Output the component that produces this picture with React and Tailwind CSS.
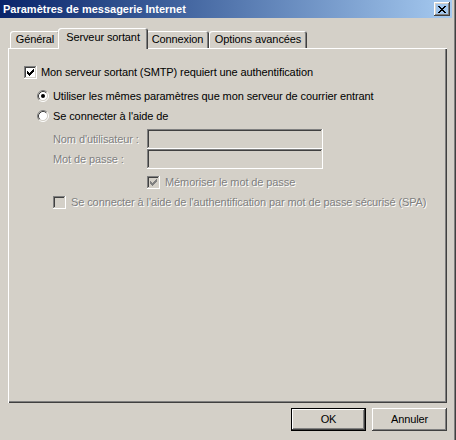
import React from "react";

// classic 3D bevels
const raised =
  "shadow-[inset_-1px_-1px_#404040,inset_1px_1px_#ffffff,inset_-2px_-2px_#808080,inset_2px_2px_#d4d0c8]";
const sunken =
  "shadow-[inset_-1px_-1px_#ffffff,inset_1px_1px_#808080,inset_-2px_-2px_#d4d0c8,inset_2px_2px_#404040]";
const disabledText = "text-[#808080] [text-shadow:1px_1px_0_#ffffff]";

const CheckBox = ({ checked, disabled }) => (
  <span
    className={`relative block w-[13px] h-[13px] shrink-0 ${sunken} ${
      disabled ? "bg-[#d4d0c8]" : "bg-white"
    }`}
  >
    {checked && (
      <svg className="absolute left-[3px] top-[3px]" width="7" height="7" viewBox="0 0 7 7">
        <path
          d="M0 2h1v1h1v1h1v-1h1v-1h1v-1h1v-1h1v3h-1v1h-1v1h-1v1h-1v1h-1v-1h-1v-1h-1v-1h-1z"
          fill={disabled ? "#808080" : "#000"}
        />
      </svg>
    )}
  </span>
);

const Radio = ({ checked }) => (
  <svg width="12" height="12" viewBox="0 0 12 12" className="block shrink-0">
    <circle cx="6" cy="6" r="4.5" fill="#fff" />
    <path d="M2.11 9.89A5.5 5.5 0 0 1 9.89 2.11" stroke="#808080" fill="none" />
    <path d="M9.89 2.11A5.5 5.5 0 0 1 2.11 9.89" stroke="#ffffff" fill="none" />
    <path d="M2.82 9.18A4.5 4.5 0 0 1 9.18 2.82" stroke="#404040" fill="none" />
    <path d="M9.18 2.82A4.5 4.5 0 0 1 2.82 9.18" stroke="#d4d0c8" fill="none" />
    {checked && <circle cx="6" cy="6" r="2" fill="#000" />}
  </svg>
);

const Tab = ({ label, width, active }) => (
  <div
    className={`flex justify-center rounded-t-[3px] shadow-[inset_1px_1px_#ffffff,inset_-1px_0_#404040,inset_-2px_0_#808080] bg-[#d4d0c8] ${
      active ? "relative z-10 h-[21px] -mb-[1px] -mx-[2px] pt-[3px]" : "h-[17px] pt-[2px]"
    }`}
    style={{ width: active ? width + 4 : width }}
  >
    {label}
  </div>
);

const Button = ({ children, isDefault }) => (
  <button
    className={`w-[75px] h-[23px] bg-[#d4d0c8] text-black ${
      isDefault
        ? "border border-black shadow-[inset_-1px_-1px_#404040,inset_1px_1px_#ffffff,inset_-2px_-2px_#808080]"
        : raised
    }`}
  >
    {children}
  </button>
);

export default function App() {
  return (
    <div
      className="relative w-[456px] h-[440px] overflow-hidden bg-[#d4d0c8] text-[11px] leading-[13px] tracking-[-0.1px] text-black shadow-[inset_-1px_0_#404040,inset_-2px_0_#808080] font-['Liberation_Sans',Arial,sans-serif]"
    >
      {/* Title bar */}
      <div className="w-[452px] h-[18px] flex items-center justify-between pl-[3px] pr-[2px] bg-gradient-to-r from-[#0a246a] to-[#a6caf0]">
        <span className="font-bold text-white tracking-normal">Paramètres de messagerie Internet</span>
        <div className={`w-[16px] h-[14px] flex items-center justify-center ${raised}`}>
          <svg width="8" height="7" viewBox="0 0 8 7">
            <path d="M0 0h2v1h1v1h2v-1h1v-1h2v1h-1v1h-1v1h-1v1h1v1h1v1h1v1h-2v-1h-1v-1h-2v1h-1v1h-2v-1h1v-1h1v-1h1v-1h-1v-1h-1v-1h-1z" fill="#000" />
          </svg>
        </div>
      </div>

      {/* Tabs */}
      <div className="flex items-end pl-[10px] mt-[10px]">
        <Tab label="Général" width={50} />
        <Tab label="Serveur sortant" width={86} active />
        <Tab label="Connexion" width={63} />
        <Tab label="Options avancées" width={98} />
      </div>

      {/* Panel */}
      <div className="ml-[8px] w-[439px] h-[355px] pl-[16px] pt-[14px] shadow-[inset_1px_1px_#ffffff,inset_-1px_-1px_#404040,inset_-2px_-2px_#808080]">
        <div className="flex items-center gap-[4px] h-[20px]">
          <CheckBox checked />
          <span>Mon serveur sortant (SMTP) requiert une authentification</span>
        </div>

        <div className="ml-[13px] mt-[4px]">
          <div className="flex items-center gap-[4px] h-[20px]">
            <Radio checked />
            <span>Utiliser les mêmes paramètres que mon serveur de courrier entrant</span>
          </div>
          <div className="flex items-center gap-[4px] h-[20px]">
            <Radio />
            <span>Se connecter à l'aide de</span>
          </div>
        </div>

        <div className="ml-[29px] mt-[3px]">
          <div className="flex items-center h-[20px]">
            <span className={`w-[94px] ${disabledText}`}>Nom d'utilisateur :</span>
            <div className={`w-[176px] h-[20px] ${sunken}`} />
          </div>
          <div className="flex items-center h-[20px]">
            <span className={`w-[94px] ${disabledText}`}>Mot de passe :</span>
            <div className={`w-[176px] h-[20px] ${sunken}`} />
          </div>
          <div className="flex items-center gap-[5px] h-[20px] mt-[3px] ml-[94px]">
            <CheckBox checked disabled />
            <span className={disabledText}>Mémoriser le mot de passe</span>
          </div>
          <div className="flex items-center gap-[5px] h-[20px]">
            <CheckBox disabled />
            <span className={disabledText}>
              Se connecter à l'aide de l'authentification par mot de passe sécurisé (SPA)
            </span>
          </div>
        </div>
      </div>

      {/* Buttons */}
      <div className="flex justify-end gap-[6px] w-[447px] mt-[5px]">
        <Button isDefault>OK</Button>
        <Button>Annuler</Button>
      </div>
    </div>
  );
}
